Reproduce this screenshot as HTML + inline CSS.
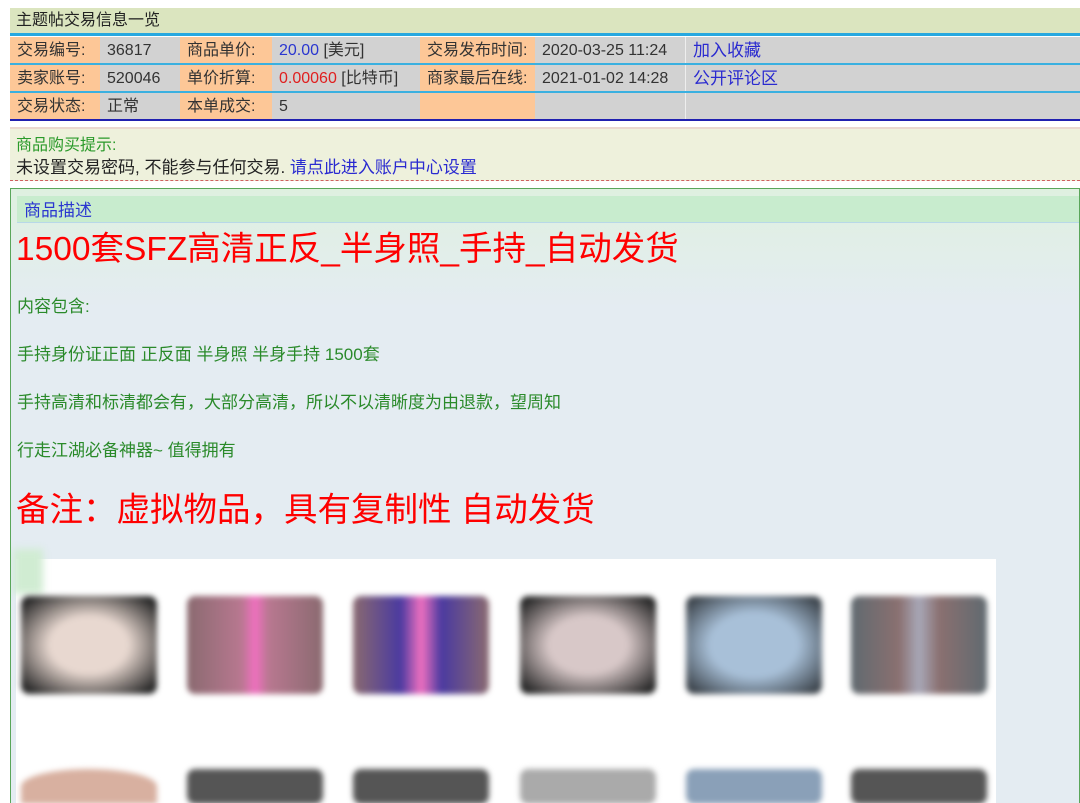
<!DOCTYPE html>
<html><head><meta charset="utf-8"><style>
*{margin:0;padding:0;box-sizing:border-box}
html,body{width:1080px;height:803px;overflow:hidden}
body{background:#fff;font-family:"Liberation Sans","Noto Sans CJK SC",sans-serif;font-size:16px;color:#333;position:relative}
.a{position:absolute}
.t{left:10px;top:8px;width:1070px;height:26px;background:#dbe5bf;padding:3px 6px;font-size:16px;line-height:20px;color:#222}
.bl{left:10px;width:1070px;height:3px;background:#27a8e0}
.row{left:10px;width:1070px;height:26px;background:#d2d2d2}
.c{position:absolute;top:0;height:26px;padding:4px 7px 0;font-size:16px;line-height:20px;white-space:nowrap;overflow:hidden}
.o{background:#fdc797;color:#333}
.g{background:#d2d2d2;color:#333}
.sep{position:absolute;top:0;width:1px;height:26px;background:#eee}
.hint{left:10px;top:127px;width:1070px;height:54px;background:#eef1dc;border-top:2px solid #ead8d0;border-bottom:1px dashed #d06060;padding:6px 6px 0;line-height:22px}
.desc{left:10px;top:188px;width:1070px;height:615px;border:1px solid #5aa65a;border-bottom:none;background:linear-gradient(180deg,#dff0e0 0,#e4ecf2 120px,#e4ecf2 100%);overflow:hidden}
.green{color:#2a8a2a;font-size:17px;line-height:22px}
.red{color:#f00;font-size:33.5px;line-height:40px}
.th{position:absolute;width:136px;height:98px;border-radius:8px;filter:blur(3px)}
</style></head><body>
<div class="a t">主题帖交易信息一览</div>
<div class="a bl" style="top:33px"></div>
<div class="a row" style="top:37px">
<div class="c o" style="left:0;width:90px">交易编号:</div><div class="c g" style="left:90px">36817</div>
<div class="c o" style="left:170px;width:92px">商品单价:</div><div class="c g" style="left:262px;color:#2a36d0">20.00 <span style="color:#333">[美元]</span></div>
<div class="c o" style="left:410px;width:115px">交易发布时间:</div><div class="c g" style="left:525px">2020-03-25 11:24</div>
<div class="sep" style="left:675px"></div><div class="c g" style="left:676px;color:#2a2ad0;font-size:17px">加入收藏</div></div>
<div class="a bl" style="top:63px;height:2px;background:#3ab0e0"></div>
<div class="a row" style="top:65px">
<div class="c o" style="left:0;width:90px">卖家账号:</div><div class="c g" style="left:90px">520046</div>
<div class="c o" style="left:170px;width:92px">单价折算:</div><div class="c g" style="left:262px;color:#e02020">0.00060 <span style="color:#333">[比特币]</span></div>
<div class="c o" style="left:410px;width:115px">商家最后在线:</div><div class="c g" style="left:525px">2021-01-02 14:28</div>
<div class="sep" style="left:675px"></div><div class="c g" style="left:676px;color:#2a2ad0;font-size:17px">公开评论区</div></div>
<div class="a bl" style="top:91px;height:2px;background:#3ab0e0"></div>
<div class="a row" style="top:93px">
<div class="c o" style="left:0;width:90px">交易状态:</div><div class="c g" style="left:90px">正常</div>
<div class="c o" style="left:170px;width:92px">本单成交:</div><div class="c g" style="left:262px">5</div>
<div class="c o" style="left:410px;width:115px"></div>
<div class="sep" style="left:675px"></div></div>
<div class="a bl" style="top:119px;height:2px;background:#2020b0"></div>
<div class="a hint"><div style="color:#2a9a2a;font-size:16px">商品购买提示:</div><div style="color:#222;font-size:17px">未设置交易密码, 不能参与任何交易. <span style="color:#2a2ad0">请点此进入账户中心设置</span></div></div>
<div class="a desc">
<div class="a" style="left:6px;top:7px;width:1064px;height:27px;background:#c8ecce;border-bottom:1px solid #b8d8e8;color:#2a36d0;padding:4px 7px 0;font-size:17px;line-height:21px">商品描述</div>
<div class="a red" style="left:5px;top:41px">1500套SFZ高清正反_半身照_手持_自动发货</div>
<div class="a green" style="left:6px;top:107px">内容包含:</div>
<div class="a green" style="left:6px;top:155px">手持身份证正面 正反面 半身照 半身手持 1500套</div>
<div class="a green" style="left:6px;top:203px">手持高清和标清都会有，大部分高清，所以不以清晰度为由退款，望周知</div>
<div class="a green" style="left:6px;top:251px">行走江湖必备神器~ 值得拥有</div>
<div class="a red" style="left:5px;top:302px">备注：虚拟物品，具有复制性 自动发货</div>
<div class="a" style="left:5px;top:370px;width:980px;height:250px;background:#fff"></div>
<div class="a" style="left:2px;top:360px;width:30px;height:45px;background:#d0ecd2;filter:blur(4px)"></div>
<div class="th" style="left:10px;top:407px;background:radial-gradient(#e8d8d0 40%,#2a2a2a 90%)"></div>
<div class="th" style="left:176px;top:407px;background:linear-gradient(90deg,#8a6a70,#b87890 40%,#f070c0 50%,#b87890 60%,#8a6a70)"></div>
<div class="th" style="left:342px;top:407px;background:linear-gradient(90deg,#8a6a70,#4a3aa0 35%,#f070c0 50%,#4a3aa0 65%,#8a6a70)"></div>
<div class="th" style="left:509px;top:407px;background:radial-gradient(#d8c8c8 40%,#2a2a2a 90%)"></div>
<div class="th" style="left:675px;top:407px;background:radial-gradient(#a8c0d8 45%,#404850 90%)"></div>
<div class="th" style="left:840px;top:407px;background:linear-gradient(90deg,#606a70,#8a7070 35%,#a8a8b8 50%,#8a7070 65%,#606a70)"></div>
<div class="th" style="left:10px;top:580px;height:35px;background:#d8b0a0;border-radius:50% 50% 0 0"></div>
<div class="th" style="left:176px;top:580px;height:35px;background:#555"></div>
<div class="th" style="left:342px;top:580px;height:35px;background:#555"></div>
<div class="th" style="left:509px;top:580px;height:35px;background:#aaa"></div>
<div class="th" style="left:675px;top:580px;height:35px;background:#8aa0b8"></div>
<div class="th" style="left:840px;top:580px;height:35px;background:#555"></div>
</div>
</body></html>
